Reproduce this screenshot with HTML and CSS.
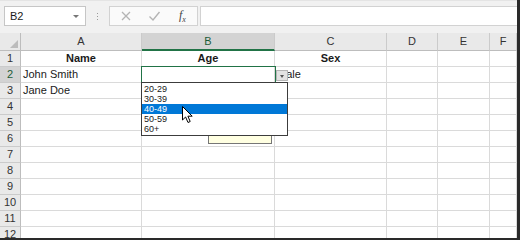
FILE: index.html
```html
<!DOCTYPE html>
<html lang="en">
<head>
    <meta charset="UTF-8">
    <title>Data validation list</title>
    <link rel="stylesheet" href="styles.css">
</head>
<body>
    <div class="window">
        <div class="formula-bar">
            <div class="name-box">B2<span class="nb-arrow"></span></div>
            <div class="grip"><span></span><span></span><span></span></div>
            <div class="fx-buttons">
                <svg class="fb-icon" width="12" height="12" viewBox="0 0 12 12"><path d="M2 2 L10 10 M10 2 L2 10" stroke="#b4b4b4" stroke-width="1.3" fill="none"/></svg>
                <svg class="fb-icon" width="13" height="12" viewBox="0 0 13 12"><path d="M1.5 6.5 L5 10 L11.5 2" stroke="#b4b4b4" stroke-width="1.4" fill="none"/></svg>
                <span class="fx">f<sub>x</sub></span>
            </div>
            <div class="formula-input"></div>
        </div>

        <div class="sheet">
            <div class="corner"></div>
            <div class="ch">A</div>
            <div class="ch sel">B</div>
            <div class="ch">C</div>
            <div class="ch">D</div>
            <div class="ch">E</div>
            <div class="ch">F</div>

            <div class="rh">1</div>
            <div class="c ctr b">Name</div>
            <div class="c ctr b">Age</div>
            <div class="c ctr b">Sex</div>
            <div class="c"></div><div class="c"></div><div class="c"></div>

            <div class="rh sel">2</div>
            <div class="c">John Smith</div>
            <div class="c active"></div>
            <div class="c">Male</div>
            <div class="c"></div><div class="c"></div><div class="c"></div>

            <div class="rh">3</div>
            <div class="c">Jane Doe</div>
            <div class="c"></div><div class="c"></div>
            <div class="c"></div><div class="c"></div><div class="c"></div>

            <div class="rh">4</div>
            <div class="c"></div><div class="c"></div><div class="c"></div>
            <div class="c"></div><div class="c"></div><div class="c"></div>

            <div class="rh">5</div>
            <div class="c"></div><div class="c"></div><div class="c"></div>
            <div class="c"></div><div class="c"></div><div class="c"></div>

            <div class="rh">6</div>
            <div class="c"></div><div class="c"></div><div class="c"></div>
            <div class="c"></div><div class="c"></div><div class="c"></div>

            <div class="rh">7</div>
            <div class="c"></div><div class="c"></div><div class="c"></div>
            <div class="c"></div><div class="c"></div><div class="c"></div>

            <div class="rh">8</div>
            <div class="c"></div><div class="c"></div><div class="c"></div>
            <div class="c"></div><div class="c"></div><div class="c"></div>

            <div class="rh">9</div>
            <div class="c"></div><div class="c"></div><div class="c"></div>
            <div class="c"></div><div class="c"></div><div class="c"></div>

            <div class="rh">10</div>
            <div class="c"></div><div class="c"></div><div class="c"></div>
            <div class="c"></div><div class="c"></div><div class="c"></div>

            <div class="rh">11</div>
            <div class="c"></div><div class="c"></div><div class="c"></div>
            <div class="c"></div><div class="c"></div><div class="c"></div>

            <div class="rh">12</div>
            <div class="c"></div><div class="c"></div><div class="c"></div>
            <div class="c"></div><div class="c"></div><div class="c"></div>
        </div>

        <!-- overlays: validation message, list button, open list, mouse pointer -->
        <div class="input-msg"></div>
        <div class="list-btn"><span></span></div>
        <ul class="dropdown">
            <li>20-29</li>
            <li>30-39</li>
            <li class="hover">40-49</li>
            <li>50-59</li>
            <li>60+</li>
        </ul>
        <svg class="cursor" width="12" height="18" viewBox="0 0 12 18">
            <path d="M0.5 0.5 L0.5 14 L3.6 11 L6 16.5 L8.2 15.5 L5.9 10.2 L10.2 10.2 Z" fill="#fff" stroke="#000" stroke-width="1" stroke-linejoin="round"/>
        </svg>
    </div>
</body>
</html>
```

FILE: styles.css
```css
*{
    margin: 0;
    padding: 0;
    box-sizing: border-box;
}
body{
    width: 520px;
    height: 240px;
    background: #fff;
    font-family: "Liberation Sans", Arial, sans-serif;
    color: #1a1a1a;
    overflow: hidden;
}
.window{
    position: relative;
    width: 520px;
    height: 240px;
    border-right: 3px solid #2a2a2a;
    border-bottom: 2px solid #2a2a2a;
    overflow: hidden;
}

/* formula bar */
.formula-bar{
    height: 33px;
    background: #f1f1f1;
    border-top: 1px solid #e4e4e4;
    padding-top: 5px;
    display: flex;
    align-items: flex-start;
}
.name-box{
    position: relative;
    margin-left: 4px;
    width: 82px;
    height: 20px;
    background: #fff;
    border: 1px solid #c6c6c6;
    font-size: 11px;
    line-height: 18px;
    padding-left: 5px;
}
.nb-arrow{
    position: absolute;
    right: 6px;
    top: 8px;
    border-left: 3px solid transparent;
    border-right: 3px solid transparent;
    border-top: 3px solid #777;
}
.grip{
    width: 23px;
    height: 20px;
    display: flex;
    flex-direction: column;
    align-items: center;
    justify-content: center;
    gap: 2px;
}
.grip span{
    width: 1px;
    height: 1px;
    background: #9a9a9a;
}
.fx-buttons{
    width: 89px;
    height: 20px;
    background: #fafafa;
    border: 1px solid #d2d2d2;
    display: flex;
    align-items: center;
    padding-left: 10px;
    gap: 16px;
}
.fx{
    font-family: "Liberation Serif", serif;
    font-style: italic;
    font-size: 12px;
    color: #444;
    margin-left: 2px;
}
.fx sub{
    font-size: 8px;
}
.formula-input{
    flex: 1;
    height: 20px;
    margin-left: 2px;
    background: #fff;
    border: 1px solid #d2d2d2;
    border-right: none;
}

/* grid */
.sheet{
    display: grid;
    grid-template-columns: 21px 121px 133px 112px 51px 52px 1fr;
    grid-template-rows: 18px repeat(12, 16px);
    font-size: 11px;
}
.corner{
    position: relative;
    background: #e9e9e9;
    border-right: 1px solid #bdbdbd;
    border-bottom: 1px solid #bdbdbd;
}
.corner::after{
    content: "";
    position: absolute;
    right: 2px;
    bottom: 2px;
    border-left: 8px solid transparent;
    border-bottom: 8px solid #bcbcbc;
}
.ch{
    background: #e9e9e9;
    border-right: 1px solid #cbcbcb;
    border-bottom: 1px solid #bdbdbd;
    text-align: center;
    line-height: 17px;
    color: #333;
}
.ch.sel{
    background: #d3d3d3;
    color: #1d5c37;
    border-bottom: 2px solid #217346;
    line-height: 16px;
}
.rh{
    background: #e9e9e9;
    border-right: 1px solid #bdbdbd;
    border-bottom: 1px solid #cbcbcb;
    text-align: center;
    line-height: 15px;
    color: #333;
}
.rh.sel{
    background: #d3d3d3;
    color: #1d5c37;
}
.c{
    background: #fff;
    border-right: 1px solid #dadada;
    border-bottom: 1px solid #dadada;
    line-height: 15px;
    padding-left: 2px;
    white-space: nowrap;
}
.ctr{
    text-align: center;
    padding-left: 0;
}
.b{
    font-weight: bold;
}
.active{
    position: relative;
    z-index: 1;
    outline: 1px solid #217346;
}

/* validation list */
.list-btn{
    position: absolute;
    left: 276px;
    top: 70px;
    width: 12px;
    height: 11px;
    background: #e2e2e2;
    border: 1px solid #b4b4b4;
    z-index: 2;
}
.list-btn span{
    position: absolute;
    left: 3px;
    top: 4px;
    border-left: 2.5px solid transparent;
    border-right: 2.5px solid transparent;
    border-top: 3px solid #555;
}
.dropdown{
    position: absolute;
    left: 141px;
    top: 82px;
    width: 147px;
    height: 54px;
    background: #fff;
    border: 1px solid #3c3c3c;
    padding-top: 1px;
    list-style: none;
    font-size: 9px;
    z-index: 3;
}
.dropdown li{
    height: 10px;
    line-height: 10px;
    padding-left: 2px;
    color: #1a1a1a;
}
.dropdown li.hover{
    background: #0078d7;
    color: #fff;
}
.input-msg{
    position: absolute;
    left: 208px;
    top: 118px;
    width: 64px;
    height: 26px;
    background: #ffffe1;
    border: 1px solid #767676;
    z-index: 2;
}
.cursor{
    position: absolute;
    left: 182px;
    top: 106px;
    z-index: 4;
}
```
